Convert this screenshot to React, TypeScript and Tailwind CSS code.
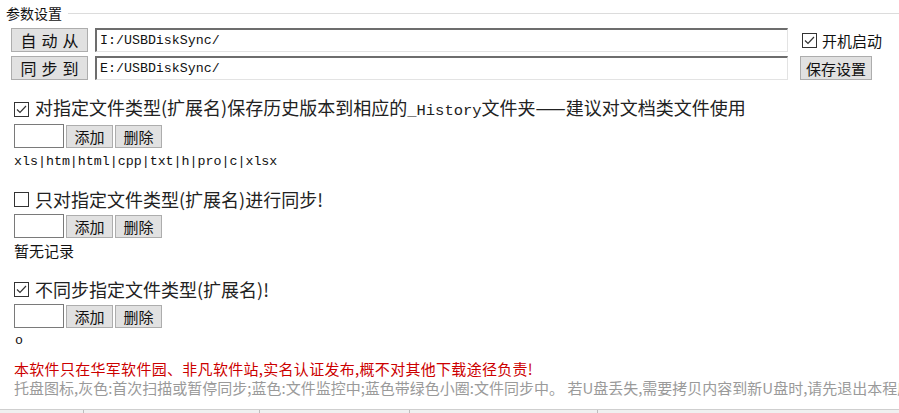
import React from "react";

const cjk = "font-['Noto_Sans_CJK_SC','Noto_Sans',sans-serif]";
const mono = "font-['Liberation_Mono','Noto_Sans_CJK_SC',monospace]";

const Check = ({ checked }: { checked: boolean }) => (
  <span className="w-[15px] h-[15px] border border-[#333] bg-white flex items-center justify-center shrink-0">
    {checked && (
      <svg width="11" height="9" viewBox="0 0 11 9">
        <polyline points="1,4.5 4,7.5 10,1" fill="none" stroke="#333" strokeWidth="1.2" />
      </svg>
    )}
  </span>
);

const WinButton = ({ children, className = "" }: { children: React.ReactNode; className?: string }) => (
  <button className={`bg-[#e1e1e1] border border-[#adadad] text-[#111] flex items-center justify-center whitespace-nowrap leading-none ${cjk} ${className}`}>
    {children}
  </button>
);

const SpacedButton = ({ chars }: { chars: string[] }) => (
  <WinButton className="w-[77px] h-[24px] ml-[11px] text-[16px] gap-[5px]">
    {chars.map((c) => (
      <span key={c}>{c}</span>
    ))}
  </WinButton>
);

const PathInput = ({ value }: { value: string }) => (
  <div className="flex-1 h-[24px] border-t-2 border-l-2 border-t-[#6d6d6d] border-l-[#6d6d6d] border-b border-r border-b-[#e3e3e3] border-r-[#e3e3e3] bg-white flex items-center pl-[3px]">
    <span className={`${mono} text-[13.3px] text-[#111] leading-none`}>{value}</span>
  </div>
);

const ExtEditor = () => (
  <div className="flex items-center h-[24px] ml-[14px]">
    <div className="w-[50px] h-[24px] border border-[#7a7a7a] bg-white" />
    <WinButton className="w-[47px] h-[23px] ml-[2px] text-[15px]">添加</WinButton>
    <WinButton className="w-[47px] h-[23px] ml-[2px] text-[15px]">删除</WinButton>
  </div>
);

const Section = ({ checked, children }: { checked: boolean; children: React.ReactNode }) => (
  <div className="flex items-center ml-[14px] h-[20px] gap-[6px]">
    <Check checked={checked} />
    <span className={`${cjk} text-[18px] leading-[20px] text-[#222] whitespace-nowrap`}>{children}</span>
  </div>
);

export default function App() {
  return (
    <div className="w-[899px] h-[413px] bg-white overflow-hidden flex flex-col relative">
      {/* 参数设置 group */}
      <div className="flex items-center h-[20px] mt-[3px]">
        <span className={`${cjk} text-[14px] leading-[20px] text-[#111] ml-[6px]`}>参数设置</span>
        <div className="flex-1 border-t border-[#dcdcdc] ml-[6px] mt-[1px]" />
      </div>

      <div className="flex items-center mt-[5px] h-[24px]">
        <SpacedButton chars={["自", "动", "从"]} />
        <div className="flex-1 ml-[7px] flex">
          <PathInput value="I:/USBDiskSync/" />
        </div>
        <div className="w-[111px] flex items-center gap-[5px] pl-[14px]">
          <Check checked />
          <span className={`${cjk} text-[15px] text-[#111] leading-none`}>开机启动</span>
        </div>
      </div>

      <div className="flex items-center mt-[4px] h-[24px]">
        <SpacedButton chars={["同", "步", "到"]} />
        <div className="flex-1 ml-[7px] flex">
          <PathInput value="E:/USBDiskSync/" />
        </div>
        <div className="w-[111px] flex items-center pl-[12px]">
          <WinButton className="w-[72px] h-[24px] text-[15px]">保存设置</WinButton>
        </div>
      </div>

      <div className="mt-[19px]">
        <Section checked>
          对指定文件类型(扩展名)保存历史版本到相应的<span className={`${mono} text-[15.5px]`}>_History</span>文件夹——建议对文档类文件使用
        </Section>
      </div>
      <div className="mt-[5px]">
        <ExtEditor />
      </div>
      <div className={`${mono} text-[13.3px] leading-[16px] text-[#111] ml-[14px] mt-[6px]`}>xls|htm|html|cpp|txt|h|pro|c|xlsx</div>

      <div className="mt-[19px]">
        <Section checked={false}>只对指定文件类型(扩展名)进行同步!</Section>
      </div>
      <div className="mt-[5px]">
        <ExtEditor />
      </div>
      <div className={`${cjk} text-[15px] leading-[18px] text-[#111] ml-[14px] mt-[4px]`}>暂无记录</div>

      <div className="mt-[19px]">
        <Section checked>不同步指定文件类型(扩展名)!</Section>
      </div>
      <div className="mt-[5px]">
        <ExtEditor />
      </div>
      <div className={`${mono} text-[13.3px] leading-[16px] text-[#111] ml-[15px] mt-[5px]`}>o</div>

      <div className={`${cjk} text-[15px] leading-[18px] text-[#cc0000] ml-[14px] mt-[11px] whitespace-nowrap tracking-[0.3px]`}>
        本软件只在华军软件园、非凡软件站,实名认证发布,概不对其他下载途径负责!
      </div>
      <div className={`${cjk} text-[15px] leading-[18px] text-[#9a9a9a] ml-[14px] mt-[1px] whitespace-nowrap overflow-hidden w-[885px]`}>
        托盘图标,灰色:首次扫描或暂停同步;蓝色:文件监控中;蓝色带绿色小圈:文件同步中。 若U盘丢失,需要拷贝内容到新U盘时,请先退出本程序
      </div>

      <div className="absolute left-0 right-0 bottom-0 h-[4px] flex border-t border-[#cfcfcf] bg-[#f0f0f0]">
        <div className="w-[84px] border-r border-[#bdbdbd]" />
        <div className="w-[176px] border-r border-[#bdbdbd]" />
        <div className="w-[150px] border-r border-[#bdbdbd]" />
        <div className="w-[188px] border-r border-[#bdbdbd]" />
        <div className="flex-1" />
      </div>
    </div>
  );
}
